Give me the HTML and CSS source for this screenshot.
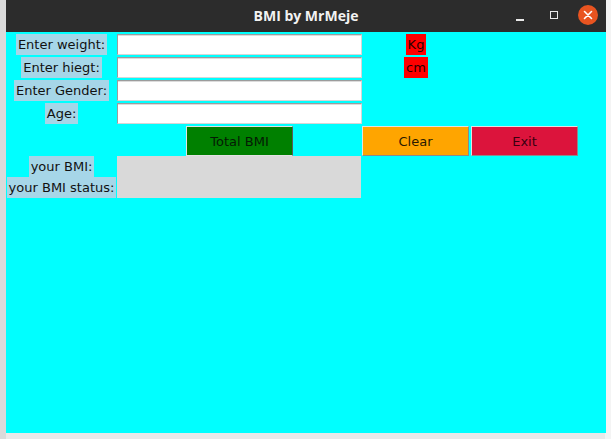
FILE: index.html
```html
<!DOCTYPE html>
<html lang="en">
<head>
<meta charset="utf-8">
<title>BMI by MrMeje</title>
<link rel="stylesheet" href="styles.css">
</head>
<body>
<div class="desktop">
  <div class="window">
    <header class="titlebar">
      <span></span>
      <h1 class="title">BMI by MrMeje</h1>
      <div class="controls">
        <span class="ctl-min"></span>
        <span class="ctl-max"></span>
        <span class="ctl-close">
          <svg width="20" height="20" viewBox="0 0 20 20">
            <circle cx="10" cy="10" r="10" fill="#e95420"/>
            <path d="M6.5 6.5 L13.5 13.5 M13.5 6.5 L6.5 13.5" stroke="#fff" stroke-width="1.6" stroke-linecap="round"/>
          </svg>
        </span>
      </div>
    </header>
    <main class="client">
      <div class="form">
        <div class="cell c1"><span class="lbl">Enter weight:</span></div>
        <div class="cell c2"><input class="entry" type="text"></div>
        <div class="cell c3"><span class="unit">Kg</span></div>

        <div class="cell c1"><span class="lbl">Enter hiegt:</span></div>
        <div class="cell c2"><input class="entry" type="text"></div>
        <div class="cell c3"><span class="unit">cm</span></div>

        <div class="cell c1"><span class="lbl">Enter Gender:</span></div>
        <div class="cell c2"><input class="entry" type="text"></div>
        <div class="cell c3"></div>

        <div class="cell c1"><span class="lbl">Age:</span></div>
        <div class="cell c2"><input class="entry" type="text"></div>
        <div class="cell c3"></div>

        <div class="cell c1"></div>
        <div class="cell c2 center"><button class="btn btn-total">Total BMI</button></div>
        <div class="cell c3 start"><button class="btn btn-clear">Clear</button></div>
        <div class="cell c4 start"><button class="btn btn-exit">Exit</button></div>

        <div class="cell c1"><span class="lbl">your BMI:</span></div>
        <div class="output"></div>
        <div class="cell c1 r7"><span class="lbl">your BMI status:</span></div>
      </div>
    </main>
  </div>
</div>
</body>
</html>
```
FILE: styles.css
```css
html, body {
  margin: 0;
  padding: 0;
}
body {
  background: #e4e4e4;
  font-family: "DejaVu Sans", sans-serif;
}
.desktop {
  width: 611px;
  height: 439px;
  overflow: hidden;
  background: linear-gradient(to right, #dadada 0 6px, #e9e9e9 6px 605px, #f4f4f4 605px);
}
.window {
  margin-left: 6px;
  width: 600px;
  display: flex;
  flex-direction: column;
}
.titlebar {
  height: 32px;
  background: #2c2c2c;
  display: grid;
  grid-template-columns: 1fr auto 1fr;
  align-items: center;
}
.title {
  margin: 0;
  font-family: "Open Sans", "DejaVu Sans", sans-serif;
  font-weight: 700;
  font-size: 14px;
  color: #f2f2f2;
  letter-spacing: 0;
  padding-top: 0;
  line-height: 30px;
}
.controls {
  display: flex;
  align-items: center;
  justify-content: flex-end;
  padding-right: 8px;
  height: 32px;
}
.ctl-min {
  width: 8px;
  height: 2px;
  background: #e8e8e8;
  margin-top: 8px;
}
.ctl-max {
  width: 6px;
  height: 6px;
  border: 1.5px solid #e8e8e8;
  margin-left: 26px;
  margin-top: -3px;
}
.ctl-close {
  display: flex;
  margin-left: 20px;
  margin-top: -2px;
}
.client {
  height: 401px;
  background: #00ffff;
}
.form {
  display: grid;
  grid-template-columns: 111px 245px 108px 109px;
  grid-template-rows: 23px 23px 23px 23px 30px 21px 21px;
  padding-top: 2px;
  color: #111;
  font-size: 13px;
}
.cell {
  display: flex;
  justify-content: center;
  align-items: flex-start;
}
.cell.start { justify-content: flex-start; }
.c1 { grid-column: 1; }
.c2 { grid-column: 2; }
.c3 { grid-column: 3; }
.c4 { grid-column: 4; }
.r7 { grid-row: 7; }
.lbl {
  background: #a6d6e8;
  padding: 0 2px;
  height: 21px;
  line-height: 21px;
  white-space: nowrap;
}
.unit {
  background: #ff0000;
  padding: 0 2px;
  height: 21px;
  line-height: 21px;
  color: #2a0000;
}
.entry {
  box-sizing: border-box;
  width: 245px;
  height: 21px;
  margin: 0;
  padding: 0 2px;
  background: #ffffff;
  border: 1px solid #9c9c9c;
  border-right-color: #d6d6d6;
  border-bottom-color: #d6d6d6;
  box-shadow: inset 0 1px 0 #dcdcdc;
  outline: none;
  font: inherit;
}
.btn {
  box-sizing: border-box;
  width: 107px;
  height: 30px;
  margin: 0;
  padding: 0;
  border: 1px solid #e2e2e2;
  border-right-color: #8a8a8a;
  border-bottom-color: #8a8a8a;
  font-family: "DejaVu Sans", sans-serif;
  font-size: 13px;
  color: #0a0a0a;
}
.btn-total { background: #008000; color: #051a05; border-right-color: #5a5a5a; border-bottom-color: #e2e2e2; }
.btn-clear { background: #ffa500; color: #2a1a00; }
.btn-exit { background: #dc143c; color: #3a0010; margin-left: 1px; }
.output {
  grid-column: 2;
  grid-row: 6 / span 2;
  background: #d9d9d9;
  width: 244px;
}
```
